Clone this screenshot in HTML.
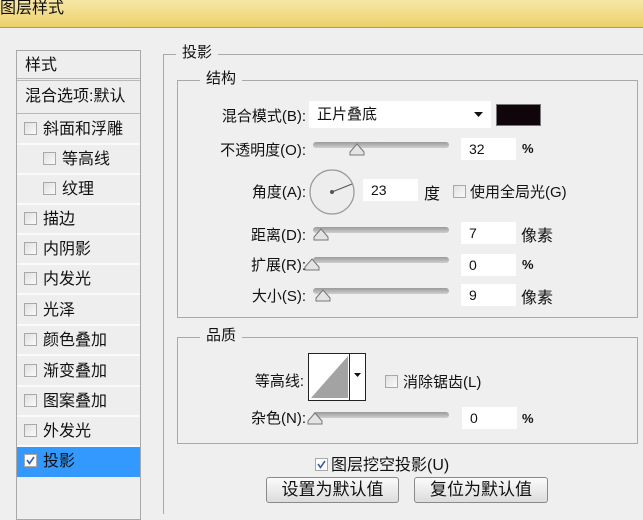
<!DOCTYPE html>
<html><head><meta charset="utf-8"><style>
*{margin:0;padding:0;box-sizing:border-box}
body{width:643px;height:508px;overflow:hidden;background:#efefef;font-family:"Liberation Sans","Noto Sans CJK SC",sans-serif;font-size:15px;color:#111;position:relative}
.a{position:absolute;white-space:nowrap}
.title{left:0;top:0;width:643px;height:28px;background:linear-gradient(#f7e7a6,#ecd16a);border-bottom:1px solid #b59a4a;font-size:16px;line-height:18px;padding-left:0}
.list{left:16px;top:50px;width:125px;height:470px;border:1px solid #a8a8a8;background:#eeeeee;font-size:16px}
.row{position:absolute;left:0;width:123px;height:30px;line-height:29px;border-bottom:2px solid #fafafa}
.cb{display:inline-block;width:13px;height:13px;border:1px solid #a8a8a8;background:linear-gradient(135deg,#e0e0e0,#fafafa);vertical-align:-1px;margin-right:6px}
.fs{border:1px solid #a9a9a9}
.lg{background:#efefef;padding:0 6px}
.inp{background:#fff;height:22px;line-height:22px;padding-left:8px;font-size:14px}
.track{height:6px;border-radius:3px;background:linear-gradient(#9a9a9a,#cfcfcf)}
.lbl{text-align:right;width:140px}
.btn{border:1px solid #8a8a8a;border-radius:3px;background:linear-gradient(#fbfbfb,#dcdcdc);height:26px;line-height:24px;text-align:center;font-size:17px}
.pc{font-size:13px;font-weight:bold}
</style></head><body>
<div class="a title">图层样式</div>

<div class="a list">
<div class="row" style="top:0;padding-left:8px;border-bottom:3px double #b8b8b8">样式</div>
<div class="row" style="top:31px;padding-left:8px;height:32px;border-bottom:1px solid #b8b8b8">混合选项:默认</div>
<div class="row" style="top:64px;padding-left:7px"><span class="cb"></span>斜面和浮雕</div>
<div class="row" style="top:94px;padding-left:26px"><span class="cb"></span>等高线</div>
<div class="row" style="top:124px;padding-left:26px"><span class="cb"></span>纹理</div>
<div class="row" style="top:154px;padding-left:7px"><span class="cb"></span>描边</div>
<div class="row" style="top:184px;padding-left:7px"><span class="cb"></span>内阴影</div>
<div class="row" style="top:214px;padding-left:7px"><span class="cb"></span>内发光</div>
<div class="row" style="top:245px;padding-left:7px"><span class="cb"></span>光泽</div>
<div class="row" style="top:275px;padding-left:7px"><span class="cb"></span>颜色叠加</div>
<div class="row" style="top:306px;padding-left:7px"><span class="cb"></span>渐变叠加</div>
<div class="row" style="top:336px;padding-left:7px"><span class="cb"></span>图案叠加</div>
<div class="row" style="top:366px;padding-left:7px"><span class="cb"></span>外发光</div>
<div class="row" style="top:396px;padding-left:7px;background:#3399ff;border:none;height:30px"><span class="cb" style="background:#fff;position:relative"><svg width="11" height="11" style="position:absolute;left:0;top:0"><path d="M2 5 L4.5 8.5 L9 2" stroke="#3a5ca8" stroke-width="1.6" fill="none"/></svg></span>投影</div>
</div>

<div class="a" style="left:163px;top:54px;width:480px;height:460px;border-top:1px solid #a9a9a9;border-left:1px solid #a9a9a9"></div>
<div class="a lg" style="left:176px;top:44px;line-height:18px">投影</div>

<div class="a fs" style="left:177px;top:80px;width:461px;height:238px"></div>
<div class="a lg" style="left:200px;top:70px;line-height:18px">结构</div>

<div class="a lbl" style="left:166px;top:105px">混合模式(B):</div>
<div class="a inp" style="left:309px;top:101px;width:182px;height:27px;line-height:27px;font-size:15px">正片叠底</div>
<svg class="a" style="left:474px;top:112px" width="10" height="6"><path d="M0 0H9L4.5 5Z" fill="#111"/></svg>
<div class="a" style="left:496px;top:104px;width:45px;height:22px;background:#0f050a;border:1px solid #777"></div>

<div class="a lbl" style="left:166px;top:139px">不透明度(O):</div>
<div class="a track" style="left:313px;top:142px;width:136px"></div>
<svg class="a" style="left:348px;top:142px" width="18" height="15"><path d="M2 13V10L9 2L16 10V13Z" fill="#e4e4e4" stroke="#777"/></svg>
<div class="a inp" style="left:461px;top:138px;width:55px">32</div>
<div class="a pc" style="left:522px;top:141px">%</div>

<div class="a lbl" style="left:166px;top:181px">角度(A):</div>
<svg class="a" style="left:308px;top:168px" width="48" height="48"><circle cx="24" cy="24" r="22" fill="#ededed" stroke="#9a9a9a" stroke-width="1.2"/><line x1="24" y1="24" x2="44" y2="16" stroke="#555" stroke-width="1.2"/><circle cx="24" cy="24" r="2" fill="#555"/></svg>
<div class="a inp" style="left:363px;top:179px;width:55px">23</div>
<div class="a" style="left:424px;top:180px;font-size:16px">度</div>
<div class="a" style="left:453px;top:181px"><span class="cb" style="margin-right:4px"></span>使用全局光(G)</div>

<div class="a lbl" style="left:166px;top:224px">距离(D):</div>
<div class="a track" style="left:313px;top:227px;width:136px"></div>
<svg class="a" style="left:312px;top:227px" width="18" height="15"><path d="M2 13V10L9 2L16 10V13Z" fill="#e4e4e4" stroke="#777"/></svg>
<div class="a inp" style="left:461px;top:222px;width:55px">7</div>
<div class="a" style="left:521px;top:222px;font-size:16px">像素</div>

<div class="a lbl" style="left:166px;top:254px">扩展(R):</div>
<div class="a track" style="left:313px;top:257px;width:136px"></div>
<svg class="a" style="left:303px;top:257px" width="18" height="15"><path d="M2 13V10L9 2L16 10V13Z" fill="#e4e4e4" stroke="#777"/></svg>
<div class="a inp" style="left:461px;top:254px;width:55px">0</div>
<div class="a pc" style="left:522px;top:257px">%</div>

<div class="a lbl" style="left:166px;top:285px">大小(S):</div>
<div class="a track" style="left:313px;top:288px;width:136px"></div>
<svg class="a" style="left:314px;top:288px" width="18" height="15"><path d="M2 13V10L9 2L16 10V13Z" fill="#e4e4e4" stroke="#777"/></svg>
<div class="a inp" style="left:461px;top:284px;width:55px">9</div>
<div class="a" style="left:521px;top:284px;font-size:16px">像素</div>

<div class="a fs" style="left:177px;top:337px;width:461px;height:107px"></div>
<div class="a lg" style="left:200px;top:327px;line-height:18px">品质</div>
<div class="a lbl" style="left:164px;top:370px">等高线:</div>
<svg class="a" style="left:308px;top:353px" width="58" height="48"><rect x="0.5" y="0.5" width="57" height="47" fill="#fff" stroke="#222"/><path d="M3 45L40 3V45Z" fill="#a3a3a3"/><line x1="41.5" y1="0" x2="41.5" y2="48" stroke="#222"/><path d="M46 20H53L49.5 24Z" fill="#111"/></svg>
<div class="a" style="left:385px;top:371px"><span class="cb" style="margin-right:5px"></span>消除锯齿(L)</div>
<div class="a lbl" style="left:166px;top:407px">杂色(N):</div>
<div class="a track" style="left:313px;top:412px;width:136px"></div>
<svg class="a" style="left:306px;top:411px" width="18" height="15"><path d="M2 13V10L9 2L16 10V13Z" fill="#e4e4e4" stroke="#777"/></svg>
<div class="a inp" style="left:462px;top:407px;width:55px">0</div>
<div class="a pc" style="left:522px;top:411px">%</div>

<div class="a" style="left:315px;top:451px;font-size:16px"><span class="cb" style="background:#fff;position:relative;margin-right:3px"><svg width="11" height="11" style="position:absolute;left:0;top:0"><path d="M2 5 L4.5 8.5 L9 2" stroke="#3a5ca8" stroke-width="1.6" fill="none"/></svg></span>图层挖空投影(U)</div>
<div class="a btn" style="left:266px;top:477px;width:133px">设置为默认值</div>
<div class="a btn" style="left:414px;top:477px;width:134px">复位为默认值</div>
</body></html>
